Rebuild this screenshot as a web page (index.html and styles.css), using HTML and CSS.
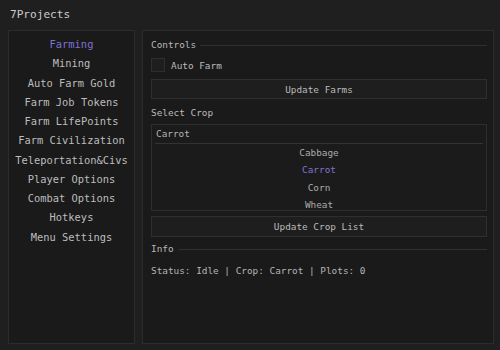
FILE: index.html
```html
<!DOCTYPE html>
<html>
<head>
    <title>7Projects</title>
    <link rel="stylesheet" href="styles.css">
</head>
<body>
<div class="window">
    <div class="title-bar">7Projects</div>

    <div class="main">
        <div class="sidebar">
            <div class="nav-item active">Farming</div>
            <div class="nav-item">Mining</div>
            <div class="nav-item">Auto Farm Gold</div>
            <div class="nav-item">Farm Job Tokens</div>
            <div class="nav-item">Farm LifePoints</div>
            <div class="nav-item">Farm Civilization</div>
            <div class="nav-item">Teleportation&amp;Civs</div>
            <div class="nav-item">Player Options</div>
            <div class="nav-item">Combat Options</div>
            <div class="nav-item">Hotkeys</div>
            <div class="nav-item">Menu Settings</div>
        </div>

        <div class="content">
            <div class="section-head">
                <span>Controls</span>
                <div class="section-line"></div>
            </div>

            <label class="check-row">
                <span class="check-box"></span>
                <span>Auto Farm</span>
            </label>

            <button class="wide-button">Update Farms</button>

            <div class="field-label">Select Crop</div>

            <div class="crop-box">
                <div class="crop-input">Carrot</div>
                <div class="crop-item">Cabbage</div>
                <div class="crop-item selected">Carrot</div>
                <div class="crop-item">Corn</div>
                <div class="crop-item">Wheat</div>
            </div>

            <button class="wide-button list-button">Update Crop List</button>

            <div class="section-head info-head">
                <span>Info</span>
                <div class="section-line"></div>
            </div>

            <div class="status-text">Status: Idle | Crop: Carrot | Plots: 0</div>
        </div>
    </div>
</div>
</body>
</html>
```

FILE: styles.css
```css
body {
    margin: 0;
    background-color: #1f1f1f;
    font-family: "DejaVu Sans Mono", "Liberation Mono", monospace;
    color: #bababa;
}

.window {
    width: 500px;
    height: 350px;
    overflow: hidden;
}

.title-bar {
    height: 30px;
    line-height: 30px;
    padding-left: 10px;
    font-size: 11.1px;
    color: #cccccc;
}

.main {
    display: flex;
    gap: 7px;
    height: 314px;
    padding: 0 6px 0 8px;
}

.sidebar {
    width: 125px;
    border: 1px solid #2c2c2c;
    background-color: #1a1a1a;
    padding-top: 4px;
}

.nav-item {
    height: 19.25px;
    line-height: 19.25px;
    text-align: center;
    font-size: 10.4px;
    color: #bdbdbd;
    white-space: nowrap;
}

.nav-item.active {
    color: #7c73d2;
}

.content {
    flex: 1;
    border: 1px solid #2c2c2c;
    background-color: #1a1a1a;
    padding: 7px 6px 0 8px;
    font-size: 9.4px;
}

.section-head {
    display: flex;
    align-items: center;
    gap: 4px;
    height: 14px;
    line-height: 14px;
    color: #b8b8b8;
}

.section-line {
    flex: 1;
    height: 1px;
    background-color: #303030;
}

.check-row {
    display: flex;
    align-items: center;
    gap: 6px;
    margin-top: 6px;
    height: 14px;
}

.check-box {
    width: 12px;
    height: 12px;
    border: 1px solid #2e2e2e;
    background-color: #1e1e1e;
}

.wide-button {
    display: block;
    width: 100%;
    height: 20px;
    margin-top: 7px;
    padding: 0;
    background-color: #1e1e1e;
    border: 1px solid #2f2f2f;
    color: #bababa;
    font-family: inherit;
    font-size: 9.4px;
}

.field-label {
    margin-top: 7px;
    height: 14px;
    line-height: 14px;
}

.crop-box {
    margin-top: 4px;
    height: 85px;
    border: 1px solid #2e2e2e;
    background-color: #1b1b1b;
    overflow: hidden;
}

.crop-input {
    height: 18px;
    line-height: 18px;
    margin: 0 3px;
    padding-left: 1px;
    border-bottom: 1px solid #333333;
    color: #b4b4b4;
}

.crop-item {
    height: 17.4px;
    line-height: 17.4px;
    text-align: center;
    color: #acacac;
}

.crop-item.selected {
    color: #7c73d2;
}

.list-button {
    height: 21px;
    margin-top: 5px;
}

.info-head {
    margin-top: 5px;
}

.status-text {
    margin-top: 8px;
    height: 14px;
    line-height: 14px;
    color: #b4b4b4;
}
```
